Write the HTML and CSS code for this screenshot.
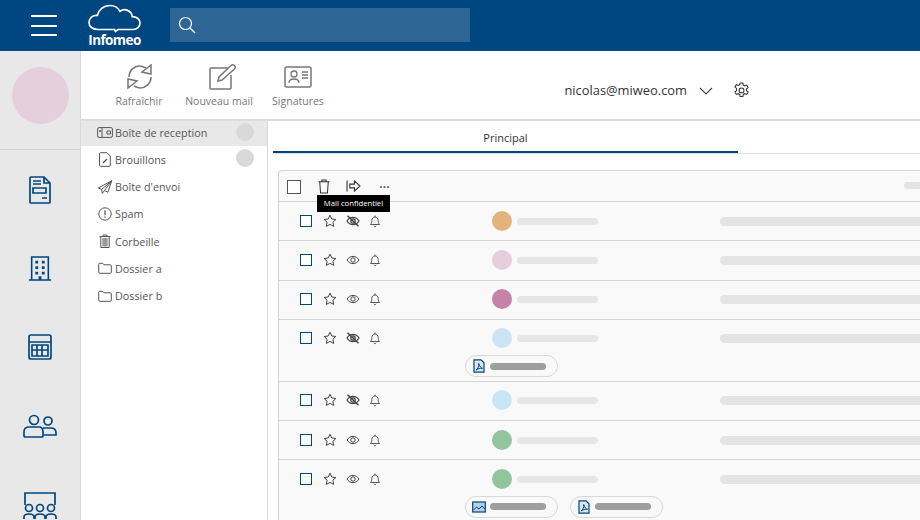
FILE: index.html
```html
<!DOCTYPE html>
<html lang="fr">
<head>
<meta charset="utf-8">
<title>Infomeo</title>
<link rel="stylesheet" href="styles.css">
</head>
<body>
<svg class="defs" width="0" height="0" aria-hidden="true">
  <symbol id="star" viewBox="0 0 14 14"><path d="M7 1.200l1.800 3.800 4.100.5-3 2.800.8 4.100L7 10.400l-3.700 2 .8-4.100-3-2.800 4.100-.5z" fill="none" stroke="currentColor"/></symbol>
  <symbol id="eye" viewBox="0 0 14 14"><path d="M1 7c1.500-2.400 3.500-3.600 6-3.600S11.500 4.600 13 7c-1.500 2.400-3.500 3.600-6 3.600S2.500 9.400 1 7z" fill="none" stroke="currentColor"/><circle cx="7" cy="7" r="2.200" fill="none" stroke="currentColor"/></symbol>
  <symbol id="eyeoff" viewBox="0 0 14 14"><path d="M1 7c1.500-2.400 3.500-3.600 6-3.600S11.500 4.600 13 7c-1.500 2.400-3.500 3.600-6 3.600S2.500 9.400 1 7z" fill="none" stroke="currentColor" stroke-width="1.300"/><circle cx="7" cy="7" r="2.200" fill="none" stroke="currentColor" stroke-width="1.300"/><path d="M1.500 1.800l11 10.400" stroke="currentColor" stroke-width="1.500"/></symbol>
  <symbol id="bell" viewBox="0 0 14 14"><path d="M2.500 10.500c1-1 1.300-2 1.300-4 0-2 1.300-3.500 3.200-3.500s3.200 1.500 3.200 3.500c0 2 .3 3 1.300 4zM5.800 12c.4.800 2 .8 2.400 0M7 3V1.500" fill="none" stroke="currentColor" stroke-width=".9"/></symbol>
  <symbol id="pdf" viewBox="0 0 12 14"><path d="M1 .8h7l3 3v9.400H1z" fill="#dbe6ef" stroke="currentColor" stroke-width="1.200"/><path d="M3 11c2-1 3-4 2.700-6.500C7 8 8 9 9.500 9.300 7 9 5 9.800 3 11z" fill="none" stroke="currentColor"/></symbol>
  <symbol id="img" viewBox="0 0 14 12"><rect x=".7" y="1" width="12.600" height="10" fill="#b9cde0" stroke="currentColor" stroke-width="1.200"/><path d="M1.500 9l3-3 2.500 2 3-3 3 3" fill="none" stroke="currentColor"/></symbol>
  <symbol id="folder" viewBox="0 0 14 12"><path d="M.7 10.300V2.300c0-.6.400-1 1-1h3l1.300 1.500h6.300c.6 0 1 .4 1 1v6.500c0 .6-.4 1-1 1H1.700c-.6 0-1-.4-1-1z" fill="none" stroke="currentColor"/></symbol>
</svg>

<header class="topbar">
  <button class="burger" aria-label="Menu"><span></span><span></span><span></span></button>
  <div class="logo">
    <svg class="cloud" width="53" height="29" viewBox="0 0 53 29"><path d="M10 25.500C4.500 25.500 1 22.500 1 18.500c0-4.500 3.800-7.500 8.300-7C10.500 6 15.500 1.500 22 1.500c4.500 0 8 2.300 10 5.800 2-1.500 4.500-2 7-1.200 3 1 5 3.500 5.200 6.500 4-.2 7.800 2.500 7.800 6.500 0 3.700-3 6.400-7 6.400H30l-2.500 2-1-2H10z" fill="none" stroke="#fff" stroke-width="1.700"/></svg>
    <span class="logo-text">Infomeo</span>
  </div>
  <div class="search">
    <svg width="18" height="18" viewBox="0 0 18 18"><circle cx="7.500" cy="7.500" r="6" fill="none" stroke="#fff" stroke-width="1.200"/><path d="M12 12l5 5" stroke="#fff" stroke-width="1.400"/></svg>
  </div>
</header>

<div class="body">
  <aside class="rail">
    <div class="rail-top"><div class="avatar"></div></div>
    <nav class="rail-nav">
      <svg class="n-doc" width="22" height="28" viewBox="0 0 22 28"><path d="M2 1h13l6 6v19a1 1 0 0 1-1 1H2a1 1 0 0 1-1-1V2a1 1 0 0 1 1-1zM15 1v6h6M4 5h8M4 8h8M4 12h13v5H4zM13 22h5" fill="none" stroke="#00477f"/></svg>
      <svg class="n-bld" width="24" height="25" viewBox="0 0 24 27"><path d="M3 26V1h18v25M0 26h24" fill="none" stroke="#00477f"/><path d="M7 5h3v3H7zM14 5h3v3h-3zM7 11h3v3H7zM14 11h3v3h-3zM7 17h3v3H7zM14 17h3v3h-3zM10.500 22h3v4h-3z" fill="#00477f"/></svg>
      <svg class="n-cal" width="24" height="26" viewBox="0 0 24 26"><rect x="1" y="1" width="22" height="24" rx="2" fill="none" stroke="#00477f"/><path d="M1 8h22M4 11h16v11H4zM4 16h16M9 11v11M14 11v11" fill="none" stroke="#00477f"/></svg>
      <svg class="n-ppl" width="34" height="24" viewBox="0 0 34 24"><circle cx="11" cy="6" r="4.500" fill="none" stroke="#00477f"/><circle cx="25" cy="7" r="4" fill="none" stroke="#00477f"/><path d="M1 22v-4c0-3 2-5 5-5h10c3 0 4 2 4 5v4a1 1 0 0 1-1 1H2a1 1 0 0 1-1-1zM20 14h8c3 0 5 2 5 5v2H21" fill="none" stroke="#00477f"/></svg>
      <svg class="n-grp" width="34" height="28" viewBox="0 0 34 28"><path d="M2 14V2h30v12" fill="none" stroke="#00477f"/><g fill="none" stroke="#00477f"><circle cx="6" cy="17" r="3.500"/><circle cx="17" cy="17" r="3.500"/><circle cx="28" cy="17" r="3.500"/><path d="M1 28v-2c0-2 2-3 5-3s5 1 5 3v2M12 28v-2c0-2 2-3 5-3s5 1 5 3v2M23 28v-2c0-2 2-3 5-3s5 1 5 3v2"/></g></svg>
    </nav>
  </aside>

  <div class="workspace">
    <section class="toolbar">
      <div class="action a-refresh">
        <svg width="26" height="26" viewBox="0 0 26 26"><path d="M2 13C2 6 8 2 12 2c3 0 5 1 7 2M24 13c0 7-6 11-11 11-2 0-4-1-6-2" fill="none" stroke="#777" stroke-width="1.600"/><path d="M24 1v9l-9-2zM1 24v-9l9 2z" fill="none" stroke="#777" stroke-width="1.500"/></svg>
        <span>Rafraîchir</span>
      </div>
      <div class="action a-new">
        <svg width="28" height="26" viewBox="0 0 28 26"><path d="M19 4H2a1 1 0 0 0-1 1v19a1 1 0 0 0 1 1h19a1 1 0 0 0 1-1V11" fill="none" stroke="#777" stroke-width="1.500"/><path d="M9 17l1-4L22 1.500c1-1 2.500-1 3.500 0s1 2.500 0 3.500L13 16z" fill="none" stroke="#777" stroke-width="1.500"/></svg>
        <span>Nouveau mail</span>
      </div>
      <div class="action a-sign">
        <svg width="28" height="22" viewBox="0 0 28 22"><rect x="1" y="1" width="26" height="20" rx="2" fill="none" stroke="#777" stroke-width="1.500"/><circle cx="10" cy="8" r="3" fill="none" stroke="#777" stroke-width="1.300"/><path d="M5 17c0-3 2-4 5-4s5 1 5 4M18 6h6M18 9h6M18 12h6" fill="none" stroke="#777" stroke-width="1.300"/></svg>
        <span>Signatures</span>
      </div>
      <div class="account">
        <span class="email">nicolas@miweo.com</span>
        <svg class="chev" width="14" height="8" viewBox="0 0 14 8"><path d="M1 1l6 6 6-6" fill="none" stroke="#444" stroke-width="1.100"/></svg>
        <svg class="gear" width="17" height="17" viewBox="0 0 16 16"><path d="M6.700 1h2.600l.4 2 1.300.7 1.900-.7 1.300 2.200-1.500 1.400v1.500l1.500 1.300-1.300 2.300-1.900-.7-1.300.7-.4 2H6.700l-.4-2-1.300-.7-1.900.7-1.300-2.300 1.500-1.300V6.100L1.800 4.700 3.100 2.500l1.900.7 1.300-.7z" fill="none" stroke="#333" stroke-width="1"/><circle cx="8" cy="7.900" r="2.300" fill="none" stroke="#333"/></svg>
      </div>
    </section>

    <div class="columns">
      <nav class="folders">
        <div class="folder active">
          <svg width="16" height="11" viewBox="0 0 16 11"><rect x=".6" y=".6" width="14.800" height="9.800" rx="1.500" fill="none" stroke="#555"/><path d="M5 1v9M10 4h3.500v3H10z" fill="none" stroke="#555"/><circle cx="3" cy="4" r="1" fill="#555"/></svg>
          <span>Boîte de reception</span><i class="count"></i>
        </div>
        <div class="folder">
          <svg width="12" height="15" viewBox="0 0 12 15"><path d="M1.500.7H8L11.300 4v9.300c0 .6-.4 1-1 1h-8.800c-.6 0-1-.4-1-1V1.700c0-.6.400-1 1-1z" fill="none" stroke="#555"/><path d="M4 11l4-4" stroke="#555" stroke-width="1.200"/></svg>
          <span>Brouillons</span><i class="count"></i>
        </div>
        <div class="folder">
          <svg width="15" height="14" viewBox="0 0 15 14"><path d="M14.300.7L.8 8l3.400 1.400L14.300.7 7 10.500l3.300 1.700zM4.200 9.400l.6 4L7 10.500" fill="none" stroke="#555"/></svg>
          <span>Boîte d'envoi</span>
        </div>
        <div class="folder">
          <svg width="14" height="14" viewBox="0 0 14 14"><circle cx="7" cy="7" r="6.200" fill="none" stroke="#555"/><path d="M7 3.200v5M7 9.500v1.300" stroke="#555" stroke-width="1.200"/></svg>
          <span>Spam</span>
        </div>
        <div class="folder">
          <svg width="12" height="14" viewBox="0 0 12 14"><path d="M.5 2.500h11M4 2.500V1h4v1.500M1.800 2.500v11h8.400v-11" fill="none" stroke="#555"/><path d="M3.300 4h5.400v8.500H3.300z" fill="#999"/></svg>
          <span>Corbeille</span>
        </div>
        <div class="folder">
          <svg class="ic-folder" width="14" height="12"><use href="#folder"/></svg>
          <span>Dossier a</span>
        </div>
        <div class="folder">
          <svg class="ic-folder" width="14" height="12"><use href="#folder"/></svg>
          <span>Dossier b</span>
        </div>
      </nav>

      <main class="mailarea">
        <div class="tabs"><div class="tab">Principal</div></div>
        <div class="panel">
          <div class="panel-head">
            <span class="head-check"></span>
            <svg class="h-trash" width="12" height="15" viewBox="0 0 14 17"><path d="M.5 3h13M4.500 3V1h5v2M2 3l1 13h8l1-13" fill="none" stroke="#333" stroke-width="1.200"/></svg>
            <svg class="h-fwd" width="15" height="12" viewBox="0 0 16 13"><path d="M1 .5v12M4 4.500h5V1l6 5.500-6 5.500V8.500H4z" fill="none" stroke="#333" stroke-width="1.200"/></svg>
            <span class="h-dots">···</span>
            <span class="h-skel"></span>
            <div class="tooltip">Mail confidentiel</div>
          </div>

          <div class="row">
            <span class="check"></span>
            <svg class="ri"><use href="#star"/></svg>
            <svg class="ri"><use href="#eyeoff"/></svg>
            <svg class="ri r-bell"><use href="#bell"/></svg>
            <i class="dot c-orange"></i><i class="bar"></i><i class="line"></i>
          </div>
          <div class="row">
            <span class="check"></span>
            <svg class="ri"><use href="#star"/></svg>
            <svg class="ri"><use href="#eye"/></svg>
            <svg class="ri r-bell"><use href="#bell"/></svg>
            <i class="dot c-pink"></i><i class="bar"></i><i class="line"></i>
          </div>
          <div class="row">
            <span class="check"></span>
            <svg class="ri"><use href="#star"/></svg>
            <svg class="ri"><use href="#eye"/></svg>
            <svg class="ri r-bell"><use href="#bell"/></svg>
            <i class="dot c-mauve"></i><i class="bar"></i><i class="line"></i>
          </div>
          <div class="row has-files">
            <span class="check"></span>
            <svg class="ri"><use href="#star"/></svg>
            <svg class="ri"><use href="#eyeoff"/></svg>
            <svg class="ri r-bell"><use href="#bell"/></svg>
            <i class="dot c-blue"></i><i class="bar"></i><i class="line"></i>
            <div class="files">
              <div class="chip"><svg width="12" height="14"><use href="#pdf"/></svg><i></i></div>
            </div>
          </div>
          <div class="row">
            <span class="check"></span>
            <svg class="ri"><use href="#star"/></svg>
            <svg class="ri"><use href="#eyeoff"/></svg>
            <svg class="ri r-bell"><use href="#bell"/></svg>
            <i class="dot c-blue"></i><i class="bar"></i><i class="line"></i>
          </div>
          <div class="row">
            <span class="check"></span>
            <svg class="ri"><use href="#star"/></svg>
            <svg class="ri"><use href="#eye"/></svg>
            <svg class="ri r-bell"><use href="#bell"/></svg>
            <i class="dot c-green"></i><i class="bar"></i><i class="line"></i>
          </div>
          <div class="row has-files">
            <span class="check"></span>
            <svg class="ri"><use href="#star"/></svg>
            <svg class="ri"><use href="#eye"/></svg>
            <svg class="ri r-bell"><use href="#bell"/></svg>
            <i class="dot c-green"></i><i class="bar"></i><i class="line"></i>
            <div class="files">
              <div class="chip"><svg width="14" height="12"><use href="#img"/></svg><i></i></div>
              <div class="chip"><svg width="12" height="14"><use href="#pdf"/></svg><i></i></div>
            </div>
          </div>
        </div>
      </main>
    </div>
  </div>
</div>
</body>
</html>
```

FILE: styles.css
```css
* { box-sizing: border-box; }
html, body { margin: 0; height: 520px; width: 920px; overflow: hidden; }
body { font-family: "Open Sans", "Noto Sans", sans-serif; background: #fff; color: #444; display: flex; flex-direction: column; }
.defs { position: absolute; }

.topbar { height: 51px; flex: none; background: #004680; display: flex; align-items: flex-start; }
.burger { width: 26px; height: 21px; margin: 15px 0 0 31px; padding: 0; border: 0; background: none; display: flex; flex-direction: column; justify-content: space-between; }
.burger span { display: block; height: 2px; background: #fff; }
.logo { width: 53px; margin: 4px 0 0 31px; display: flex; flex-direction: column; align-items: center; }
.cloud { display: block; margin-bottom: 0; }
.logo-text { font-size: 13.500px; line-height: 14px; font-weight: 700; color: #fff; letter-spacing: -.6px; }
.search { width: 300px; height: 34px; margin: 8px 0 0 29px; background: #2d6595; display: flex; align-items: center; padding-left: 8px; }

.body { flex: 1; display: flex; min-height: 0; }
.rail { width: 81px; flex: none; background: #e8e8e8; border-right: 1px solid #d8d8d8; display: flex; flex-direction: column; }
.rail-top { height: 99px; flex: none; border-bottom: 1px solid #d4d4d4; padding: 16px 0 0 11.500px; }
.avatar { width: 57px; height: 57px; border-radius: 50%; background: #e5cfdc; }
.rail-nav { display: flex; flex-direction: column; align-items: center; padding-top: 26px; }
.rail-nav svg { display: block; flex: none; }
.rail-nav svg * { stroke-width: 1.700; }
.n-doc { margin-bottom: 52px; }
.n-bld { margin-bottom: 53px; }
.n-cal { margin-bottom: 54px; }
.n-ppl { margin-bottom: 53px; }

.workspace { flex: 1; min-width: 0; display: flex; flex-direction: column; }
.toolbar { height: 70px; flex: none; border-bottom: 2px solid #dcdcdc; display: flex; align-items: flex-start; }
.action { display: flex; flex-direction: column; align-items: center; font-size: 10.500px; line-height: 14px; color: #777; padding-top: 13px; }
.action svg { display: block; height: 26px; margin-bottom: 4px; }
.action span { white-space: nowrap; }
.a-refresh { width: 48px; margin-left: 34px; }
.a-refresh svg { margin-left: 2px; }
.a-new { width: 70px; margin-left: 21px; }
.a-new svg { margin-left: 7px; }
.a-sign { width: 54px; margin-left: 17px; }
.a-sign svg { margin-left: -1px; }
.account { margin: 19px 169px 0 auto; display: flex; align-items: center; height: 40px; }
.email { font-size: 12.900px; color: #333; }
.chev { margin: 2px 20px 0 12px; }
.gear { margin-right: 1px; }

.columns { flex: 1; display: flex; min-height: 0; }
.folders { width: 187px; flex: none; border-right: 1px solid #d8d8d8; }
.folder { height: 27.200px; display: flex; align-items: center; padding-left: 16px; font-size: 10.800px; color: #555; position: relative; }
.folder svg { width: 16px; flex: none; margin-right: 2px; }
.folder.active { background: #e8e8e8; height: 25px; padding-bottom: 2px; }
.count { position: absolute; right: 13px; top: 3px; width: 18px; height: 18px; border-radius: 50%; background: #d9d9d9; }
.active .count { top: 2px; }
.ic-folder { color: #555; }

.mailarea { flex: 1; min-width: 0; padding-left: 5px; }
.tabs { height: 33px; border-bottom: 1px solid #dcdcdc; }
.tab { width: 465px; height: 32px; border-bottom: 2px solid #00477f; text-align: center; font-size: 11px; line-height: 33px; color: #333; }
.panel { margin: 16px 0 0 5px; border: 1px solid #d4d4d4; border-right: 0; background: #f9f9f9; border-radius: 4px 0 0 0; }
.panel-head { height: 31px; border-bottom: 1px solid #d4d4d4; position: relative; display: flex; align-items: center; }
.head-check { width: 14px; height: 14px; border: 1px solid #555; margin: 2px 0 0 8px; background: #fff; }
.h-trash { margin-left: 17px; }
.h-fwd { margin-left: 16px; }
.h-dots { margin-left: 18px; font-size: 15px; line-height: 1; color: #444; letter-spacing: -.4px; }
.h-skel { position: absolute; right: 0; top: 11px; width: 16px; height: 7px; border-radius: 4px 0 0 4px; background: #e4e4e4; }
.tooltip { position: absolute; left: 38px; top: 24px; height: 17px; width: 73px; background: #000; color: #fff; font-size: 7.700px; line-height: 17px; text-align: center; white-space: nowrap; z-index: 2; }

.row { height: 39.300px; border-bottom: 1px solid #d4d4d4; display: flex; align-items: flex-start; padding: 12.600px 0 0 21px; position: relative; }
.row.has-files { height: 62px; }
.check { width: 12px; height: 12px; border: 1.500px solid #00477f; background: #fff; flex: none; }
.ri { width: 14px; height: 14px; flex: none; margin: -1px 0 0 11px; color: #444; }
.ri + .ri { margin-left: 9px; }
.ri.r-bell { margin-left: 8px; }
.dot { width: 20px; height: 20px; border-radius: 50%; flex: none; margin: -4px 0 0 110px; }
.bar { width: 81px; height: 7px; border-radius: 4px; background: #e6e6e6; flex: none; margin: 3px 0 0 5px; }
.line { flex: 1; min-width: 0; height: 9px; border-radius: 5px 0 0 5px; background: #e4e4e4; margin: 2px 0 0 122px; }
.c-orange { background: #e4b27b; }
.c-pink { background: #e5cfdc; }
.c-mauve { background: #c683a8; }
.c-blue { background: #c9e5f4; }
.c-green { background: #92c49e; }
.files { position: absolute; left: 186px; top: 35.500px; display: flex; gap: 12px; }
.chip { width: 93px; height: 22px; border: 1px solid #d8d8d8; border-radius: 11px; display: flex; align-items: center; padding-left: 6px; color: #00477f; }
.chip svg { width: 14px; height: 14px; flex: none; }
.chip i { width: 56px; height: 7px; border-radius: 4px; background: #9e9e9e; margin-left: 4px; }
```
